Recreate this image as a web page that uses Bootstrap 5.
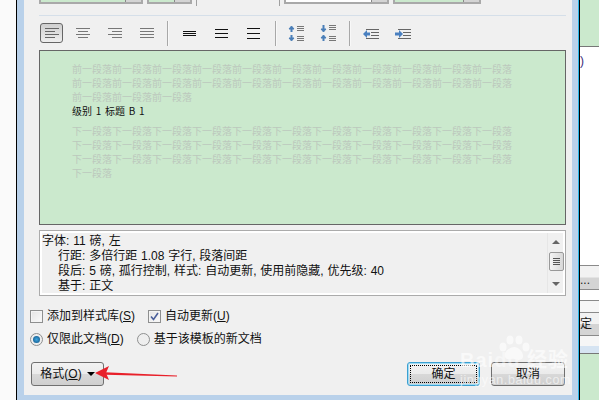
<!DOCTYPE html>
<html lang="zh">
<head>
    <meta charset="UTF-8">
    <meta name="viewport" content="width=device-width, initial-scale=1.0">
    <title>修改样式</title>
    <link rel="stylesheet" href="https://cdn.jsdelivr.net/npm/bootstrap@5.3.0/dist/css/bootstrap.min.css">
    <style>
        html, body { height: 400px; overflow: hidden; }
        body {
            width: 600px;
            background: #fff;
            color: #111;
            font-family: "Liberation Sans", "Noto Sans CJK SC", sans-serif;
            font-size: 12px;
        }
        .desk-left { width: 16px; background: #fafafa; border-right: 1px solid #000; box-sizing: content-box; }
        .frame-strip { background: #b9d1ea; box-shadow: inset -1px 0 0 #2ab7e8; }
        .frame-main { width: 562px; height: 400px; padding: 0 7px 5px 7px; }
        .dlg { width: 548px; height: 395px; background: #f0f0f0; padding: 0 6px 0 15px; position: relative; }
        .desk-right { width: 20px; border-left: 1px solid #000; overflow: hidden; }

        .combo-row { height: 15px; align-items: flex-start; }
        .combo { height: 4px; border: 2px solid #a9a9a9; border-top: 0; background: #fff; position: relative; }
        .combo::after { content: ""; position: absolute; right: 0; top: 0; width: 16px; height: 2px; background: #d4d4d4; border-left: 1px solid #888; }
        .combo-green { background: #cbe9cd; }
        .v-cut { width: 1px; height: 6px; background: #a0a0a0; }
        .h-line { height: 1px; background: #d5dfe9; margin-right: 0; width: 527px; }

        .tool-row { height: 34px; padding-top: 7px; width: 527px; align-items: flex-start; }
        .tool-btn { width: 32px; height: 20px; display: flex; align-items: center; justify-content: center; }
        .tool-on { width: 23px; margin: 0 3px 0 1px; border: 1px solid #666; border-radius: 3px; background: linear-gradient(#cfcfcf, #eee); }
        .tool-sep { width: 2px; height: 25px; margin: -2px 0 0; background: #a8a8a8; border-right: 1px solid #f8f8f8; }

        .preview { width: 527px; height: 175px; border: 1px solid #666; background: #cbe9cd; padding: 11px 0 0 32px; font-size: 10px; line-height: 14px; font-family: "Noto Sans CJK SC", sans-serif; }
        .ghost { color: #bcc8bd; white-space: pre; }
        .sample { color: #111; height: 20px; line-height: 13px; word-spacing: 1.5px; }

        .desc { width: 527px; height: 66px; margin-top: 5px; border: 1px solid #ababab; background: #f0f0f0; box-shadow: inset 0 0 0 2px #fff; padding: 3px 0 0 2px; line-height: 15px; word-spacing: .5px; position: relative; overflow: hidden; }
        .desc p { margin: 0; white-space: pre; }
        .desc .ind { padding-left: 16px; }
        .sbar { position: absolute; right: 2px; top: 2px; bottom: 2px; width: 16px; background: #f0f0f0; border-left: 1px solid #e6e6e6; }
        .sb-up, .sb-down { position: absolute; left: 4px; width: 0; height: 0; border-left: 4px solid transparent; border-right: 4px solid transparent; }
        .sb-up { top: 7px; border-bottom: 4px solid #666; }
        .sb-down { bottom: 7px; border-top: 4px solid #666; }
        .sb-thumb { position: absolute; left: 1px; top: 19px; width: 15px; height: 19px; border: 1px solid #999; border-radius: 2px; background: linear-gradient(90deg, #f4f4f4, #d8d8d8); display: flex; flex-direction: column; align-items: center; justify-content: center; gap: 1px; }
        .sb-thumb i { display: block; width: 7px; height: 1px; background: #555; }

        .opt-row { height: 14px; margin-left: -9px; align-items: center; font-size: 12px; white-space: nowrap; }
        .chk { width: 13px; height: 13px; border: 1px solid #8e8f8f; background: linear-gradient(135deg, #e4e4e4, #fafafa); box-shadow: inset 0 0 0 1px #f4f4f4; margin-right: 4px; display: flex; align-items: center; justify-content: center; }
        .rad { width: 13px; height: 13px; border: 1px solid #8e8f8f; border-radius: 50%; background: #eee; margin-right: 4px; display: flex; align-items: center; justify-content: center; }
        .rad i { display: block; width: 7px; height: 7px; border-radius: 50%; background: radial-gradient(#3ea6e0, #0d4f80); }
        .btn-row { margin: 16px 0 0 -8px; width: 534px; }
        .win-btn { height: 24px; border: 1px solid #707070; border-radius: 3px; background: linear-gradient(#f2f2f2 0, #ebebeb 48%, #d8d8d8 52%, #cfcfcf 100%); font-size: 12px; color: #111; padding: 0; display: flex; align-items: center; justify-content: center; }
        .win-default { border-color: #3c9fd0; box-shadow: inset 0 0 0 1px #9fdcf5; position: relative; }
        .win-default::after { content: ""; position: absolute; inset: 2px; border: 1px dotted #000; }
        .caret-down { display: inline-block; width: 0; height: 0; border-left: 4px solid transparent; border-right: 4px solid transparent; border-top: 4px solid #000; margin-left: 5px; }

        .arrow-over { position: absolute; left: 71px; top: 364px; }
        .watermark { position: absolute; left: 436px; top: 335px; width: 110px; color: #fff; opacity: .6; white-space: nowrap; font-family: "Liberation Sans", "Noto Sans CJK SC", sans-serif; pointer-events: none; }
        .wm-paw { display: block; margin-left: 37px; height: 25px; }
        .wm-a { font-size: 20px; font-weight: 700; letter-spacing: 1px; line-height: 20px; margin-top: -10px; }
        .wm-b { font-size: 12.500px; line-height: 14px; letter-spacing: .6px; margin-top: 3px; }

        .side-pane { height: 400px; font-size: 12px; color: #1a1a1a; }
        .side-green { background: #cbe9cd; }
        .side-line { border-top: 1px solid #777; line-height: 28px; color: #3a2a7a; }
        .side-btn { background: linear-gradient(#f2f2f2 48%, #d4d4d4 52%); border-top: 1px solid #8a8a8a; border-bottom: 1px solid #8a8a8a; overflow: hidden; white-space: nowrap; }
        .side-gap { background: #f6f6f6; }
    </style>
</head>
<body>
<div class="d-flex">
    <div class="desk-left"></div>
    <div class="frame-strip frame-main">
        <div class="dlg">
            <div class="d-flex combo-row">
                <div class="combo combo-green" style="width:104px"></div>
                <div class="combo combo-green ms-1" style="width:45px"></div>
                <div class="v-cut" style="margin-left:4px"></div>
                <div class="v-cut" style="margin-left:82px"></div>
                <div class="combo" style="width:105px;margin-left:4px"></div>
                <div class="combo combo-green" style="width:88px;margin-left:4px"></div>
            </div>
            <div class="h-line"></div>

            <div class="d-flex tool-row">
                <div class="tool-btn tool-on">
                    <svg width="15" height="13" stroke="#666"><path d="M1 1.500h14M1 4.500h10M1 7.500h14M1 10.500h10"/></svg>
                </div>
                <div class="tool-btn">
                    <svg width="15" height="13" stroke="#777"><path d="M1 1.500h14M3 4.500h10M1 7.500h14M3 10.500h10"/></svg>
                </div>
                <div class="tool-btn">
                    <svg width="15" height="13" stroke="#777"><path d="M1 1.500h14M5 4.500h10M1 7.500h14M5 10.500h10"/></svg>
                </div>
                <div class="tool-btn">
                    <svg width="15" height="13" stroke="#777"><path d="M1 1.500h14M1 4.500h14M1 7.500h14M1 10.500h14"/></svg>
                </div>
                <div class="tool-sep" style="margin-left:5px"></div>
                <div class="tool-btn" style="margin-left:4px">
                    <svg width="13" height="7" stroke="#111"><path d="M0 1.500h13M0 3.500h13M0 5.500h13"/></svg>
                </div>
                <div class="tool-btn">
                    <svg width="13" height="9" stroke="#111"><path d="M0 .5h13M0 4.500h13M0 8.500h13"/></svg>
                </div>
                <div class="tool-btn">
                    <svg width="13" height="11" stroke="#111"><path d="M0 .5h13M0 5.500h13M0 10.500h13"/></svg>
                </div>
                <div class="tool-sep" style="margin-left:6px"></div>
                <div class="tool-btn" style="margin-left:3px">
                    <svg width="16" height="17" fill="none">
                        <path d="M3.500 3v4M3.500 10v4" stroke="#4a7fb8" stroke-width="2"/>
                        <path d="M1 4l2.500-3L6 4zM1 13l2.500 3L6 13z" fill="#4a7fb8" stroke="#4a7fb8"/>
                        <path d="M9 1.500h7M9 3.500h7M9 5.500h7M9 11.500h7M9 13.500h7M9 15.500h7" stroke="#777"/>
                    </svg>
                </div>
                <div class="tool-btn">
                    <svg width="16" height="17" fill="none">
                        <path d="M3.500 0v4M3.500 12v4" stroke="#4a7fb8" stroke-width="2"/>
                        <path d="M1 4l2.500 3L6 4zM1 13l2.500-3L6 13z" fill="#4a7fb8" stroke="#4a7fb8"/>
                        <path d="M9 .5h7M9 2.500h7M9 4.500h7M9 11.500h7M9 13.500h7M9 15.500h7" stroke="#777"/>
                    </svg>
                </div>
                <div class="tool-sep" style="margin-left:5px"></div>
                <div class="tool-btn" style="margin-left:4px">
                    <svg width="16" height="11" fill="none">
                        <path d="M3 1.500h13M8 4.500h8M8 7.500h8M3 10.500h13" stroke="#666"/>
                        <path d="M7 6H3" stroke="#4a80c0" stroke-width="3"/>
                        <path d="M0 6l4-4v8z" fill="#4a80c0"/>
                    </svg>
                </div>
                <div class="tool-btn">
                    <svg width="16" height="11" fill="none">
                        <path d="M3 1.500h13M8 4.500h8M8 7.500h8M3 10.500h13" stroke="#666"/>
                        <path d="M0 6h5" stroke="#4a80c0" stroke-width="3"/>
                        <path d="M8 6L4 2v8z" fill="#4a80c0"/>
                    </svg>
                </div>
            </div>

            <div class="preview">
                <div class="ghost">前一段落前一段落前一段落前一段落前一段落前一段落前一段落前一段落前一段落前一段落前一段落</div>
                <div class="ghost">前一段落前一段落前一段落前一段落前一段落前一段落前一段落前一段落前一段落前一段落前一段落</div>
                <div class="ghost">前一段落前一段落前一段落</div>
                <div class="sample">级别 1 标题 B 1</div>
                <div class="ghost">下一段落下一段落下一段落下一段落下一段落下一段落下一段落下一段落下一段落下一段落下一段落</div>
                <div class="ghost">下一段落下一段落下一段落下一段落下一段落下一段落下一段落下一段落下一段落下一段落下一段落</div>
                <div class="ghost">下一段落下一段落下一段落下一段落下一段落下一段落下一段落下一段落下一段落下一段落下一段落</div>
                <div class="ghost">下一段落</div>
            </div>

            <div class="desc">
                <p>字体: 11 磅, 左</p>
                <p class="ind">行距: 多倍行距 1.08 字行, 段落间距</p>
                <p class="ind">段后: 5 磅, 孤行控制, 样式: 自动更新, 使用前隐藏, 优先级: 40</p>
                <p class="ind">基于: 正文</p>
                <div class="sbar">
                    <span class="sb-up"></span>
                    <div class="sb-thumb"><i></i><i></i><i></i><i></i></div>
                    <span class="sb-down"></span>
                </div>
            </div>

            <div class="d-flex opt-row" style="margin-top:13px">
                <span class="chk"></span><span>添加到样式库(<u>S</u>)</span>
                <span class="chk" style="margin-left:13px">
                    <svg width="9" height="9" fill="none"><path d="M1 4.500l2.500 3L8 1" stroke="#4a5f9a" stroke-width="1.600"/></svg>
                </span><span>自动更新(<u>U</u>)</span>
            </div>
            <div class="d-flex opt-row" style="margin-top:9px">
                <span class="rad"><i></i></span><span>仅限此文档(<u>D</u>)</span>
                <span class="rad" style="margin-left:13px"></span><span>基于该模板的新文档</span>
            </div>

            <div class="d-flex btn-row">
                <button class="win-btn" style="width:73px" type="button">格式(<u>O</u>)<span class="caret-down"></span></button>
                <button class="win-btn win-default" style="width:73px;margin-left:auto" type="button">确定</button>
                <button class="win-btn" style="width:74px;margin-left:11px" type="button">取消</button>
            </div>

            <svg class="arrow-over" width="84" height="18">
                <path d="M10 8.300L82 11.500L82 12.500L10 10.700z" fill="#e8202a"/>
                <path d="M0 9L14 2L11 9L14 16z" fill="#e8202a"/>
            </svg>
            <div class="watermark">
                <svg class="wm-paw" width="34" height="25" fill="#fff">
                    <ellipse cx="6" cy="12" rx="3.500" ry="4.500"/>
                    <ellipse cx="13" cy="5" rx="3.500" ry="4.500"/>
                    <ellipse cx="22" cy="5" rx="3.500" ry="4.500"/>
                    <ellipse cx="29" cy="12" rx="3.500" ry="4.500"/>
                    <path d="M17 12c5 0 10 6 9 10s-6 3-9 2-7 2-9-2 4-10 9-10z"/>
                </svg>
                <div class="wm-a">Bai<span style="opacity:.7">du</span> 经验</div>
                <div class="wm-b">jingyan.baidu.com</div>
            </div>
        </div>
    </div>
    <div class="desk-right">
        <div class="d-flex flex-column side-pane">
            <div class="side-green" style="height:46px"></div>
            <div class="side-line" style="height:219px">)</div>
            <div class="side-btn" style="height:25px;line-height:28px">...</div>
            <div style="height:10px"></div>
            <div class="side-gap" style="height:12px;border-top:1px solid #8a8a8a"></div>
            <div class="side-btn" style="height:24px;line-height:22px">定</div>
            <div class="side-gap" style="height:10px"></div>
            <div style="height:7px;background:#d6e4f2"></div>
            <div class="side-green flex-grow-1" style="border-top:1px solid #777"></div>
        </div>
    </div>
</div>
<script src="https://cdn.jsdelivr.net/npm/bootstrap@5.3.0/dist/js/bootstrap.bundle.min.js"></script>
</body>
</html>
